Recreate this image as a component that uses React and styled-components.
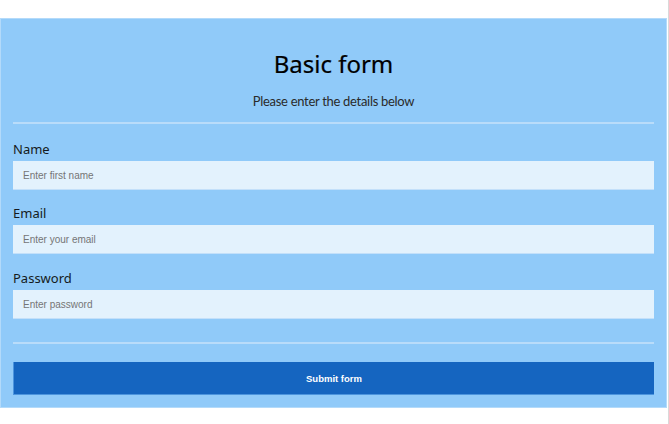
import React from "react";
import styled, { createGlobalStyle } from "styled-components";

const GlobalStyle = createGlobalStyle`
  html, body {
    margin: 0;
    padding: 0;
    background: #fff;
  }
  * {
    box-sizing: border-box;
  }
`;

const fields = [
  { id: "name", label: "Name", type: "text", placeholder: "Enter first name" },
  { id: "email", label: "Email", type: "email", placeholder: "Enter your email" },
  { id: "password", label: "Password", type: "password", placeholder: "Enter password" },
];

export default function App() {
  const handleSubmit = (e) => e.preventDefault();

  return (
    <Page>
      <GlobalStyle />
      <Panel onSubmit={handleSubmit}>
        <Title>Basic form</Title>
        <Subtitle>Please enter the details below</Subtitle>
        <Divider />
        <Fields>
          {fields.map((f) => (
            <Field key={f.id}>
              <Label htmlFor={f.id}>{f.label}</Label>
              <Input id={f.id} type={f.type} placeholder={f.placeholder} />
            </Field>
          ))}
        </Fields>
        <Divider $spaced />
        <Button type="submit">Submit form</Button>
      </Panel>
    </Page>
  );
}

const Page = styled.div`
  min-height: 100vh;
  padding-top: 18px;
  padding-right: 1px;
  border-right: 1px solid #d9d9d9;
`;

const Panel = styled.form`
  display: flex;
  flex-direction: column;
  background: #90caf9;
  border: 1px solid #b3dafa;
  padding: 0 12px 12px;
`;

const Title = styled.h1`
  margin: 29px 0 0;
  font-family: "Noto Sans", sans-serif;
  font-weight: 400;
  font-size: 24px;
  line-height: 32px;
  color: #000;
  text-align: center;
  -webkit-text-stroke: 0.2px #000;
`;

const Subtitle = styled.p`
  margin: 13px 0 0;
  font-family: "Liberation Sans Narrow", "Lato", sans-serif;
  font-size: 13px;
  line-height: 16px;
  letter-spacing: -0.3px;
  color: #2a2a2a;
  text-align: center;
`;

const Divider = styled.hr`
  margin: ${(p) => (p.$spaced ? "23px 0 18px" : "13px 0 0")};
  border: none;
  height: 2px;
  background: #b9dcfa;
`;

const Fields = styled.div`
  display: flex;
  flex-direction: column;
  gap: 15px;
  margin-top: 17px;

  & > div:last-child {
    margin-top: 1px;
  }
`;

const Field = styled.div`
  display: flex;
  flex-direction: column;
  gap: 4px;
`;

const Label = styled.label`
  font-family: "Noto Sans", sans-serif;
  font-size: 13px;
  line-height: 16px;
  color: #151a20;
`;

const Input = styled.input`
  height: 29px;
  padding: 0 10px;
  border: none;
  border-bottom: 1px solid #c3e0fa;
  background: #e3f2fd;
  font-family: "Liberation Sans", Arial, sans-serif;
  font-size: 10px;
  color: #333;
  outline: none;

  &::placeholder {
    color: #757575;
  }
`;

const Button = styled.button`
  height: 33px;
  border: none;
  border-left: 1px solid #4c95de;
  border-bottom: 1px solid #4c95de;
  background: #1565c0;
  color: #fff;
  font-family: "Liberation Sans", Arial, sans-serif;
  font-size: 9.5px;
  font-weight: 600;
  cursor: pointer;
`;
